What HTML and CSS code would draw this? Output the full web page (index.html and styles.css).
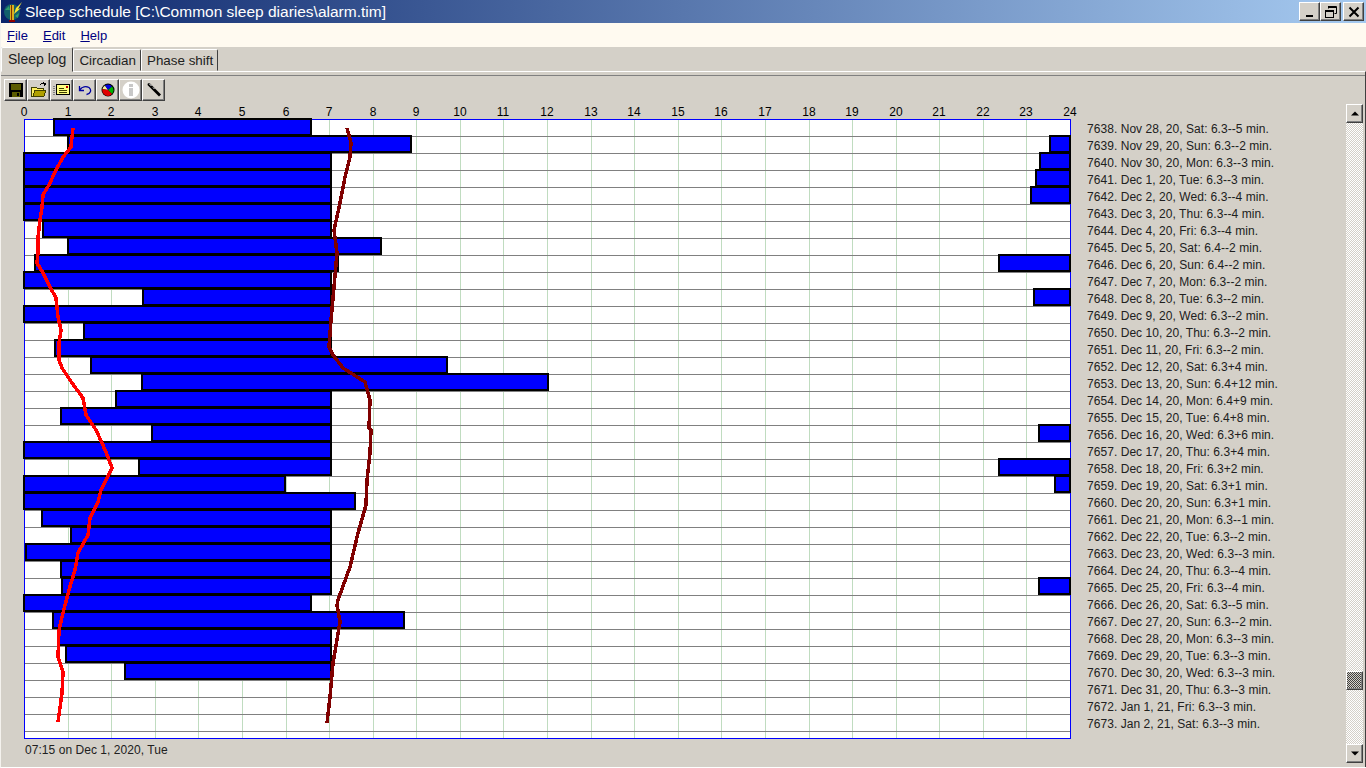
FILE: index.html
```html
<!DOCTYPE html>
<html lang="en">
<head>
    <meta charset="UTF-8">
    <title>Sleep schedule</title>
    <link rel="stylesheet" href="styles.css">
</head>
<body>
    <div class="titlebar">
        <svg class="app-icon" width="20" height="22" viewBox="0 0 20 22">
            <circle cx="9" cy="11" r="8" fill="#12606c"/>
            <path d="M2 9 L6 5 L7 9 Z M12 15 L16 12 L15 17 Z" fill="#2f9e6a"/>
            <path d="M13 7 L19 1 L15 8 L18 7 L11 13 Z" fill="#f6e632"/>
            <rect x="7" y="4" width="4" height="15" fill="#d8b020"/>
            <rect x="8" y="4" width="1" height="15" fill="#803000"/>
            <rect x="6" y="19" width="6" height="2" fill="#900000"/>
        </svg>
        <span class="title-text">Sleep schedule [C:\Common sleep diaries\alarm.tim]</span>
        <div class="caption-buttons">
            <button class="bevel caption-btn">
                <svg width="12" height="12" viewBox="0 0 12 12"><rect x="2" y="9" width="7" height="2"/></svg>
            </button>
            <button class="bevel caption-btn">
                <svg width="14" height="14" viewBox="0 0 14 14" fill="none" stroke="#000"><path d="M4.5 3.5 V1.5 H12.5 V8.5 H10.5"/><path d="M4 2 H12" stroke-width="2"/><rect x="1.5" y="5.5" width="8" height="7"/><path d="M1 6 H10" stroke-width="2"/></svg>
            </button>
            <button class="bevel caption-btn close-btn">
                <svg width="12" height="12" viewBox="0 0 12 12" stroke="#000" stroke-width="2"><path d="M1.5 1.5 L10.5 10.5 M10.5 1.5 L1.5 10.5"/></svg>
            </button>
        </div>
    </div>

    <div class="menubar">
        <span class="menu-item"><u>F</u>ile</span>
        <span class="menu-item"><u>E</u>dit</span>
        <span class="menu-item"><u>H</u>elp</span>
    </div>

    <div class="tabs">
        <div class="tab active">Sleep log</div>
        <div class="tab">Circadian</div>
        <div class="tab">Phase shift</div>
    </div>

    <div class="panel">
        <div class="toolbar">
            <button class="bevel tool-btn">
                <svg width="16" height="16" viewBox="0 0 16 16" shape-rendering="crispEdges"><rect x="1" y="1" width="14" height="14"/><rect x="3" y="2" width="10" height="6" fill="#5c5c00"/><rect x="4" y="10" width="8" height="5" fill="#5c5c00"/><rect x="9" y="11" width="2" height="3"/></svg>
            </button>
            <button class="bevel tool-btn">
                <svg width="18" height="16" viewBox="0 0 18 16" shape-rendering="crispEdges"><path d="M1 5 H6 L7 6 H13 V8 H5 L3 14 H1 Z" fill="#fff060" stroke="#404000"/><path d="M3 14 L5 8 H16 L14 14 Z" fill="#b0a000" stroke="#404000"/><path d="M10 3 C11 1 13 1 15 2 M13 0.5 L15.5 2 L14 4" fill="none" stroke="#000"/></svg>
            </button>
            <button class="bevel tool-btn">
                <svg width="18" height="14" viewBox="0 0 18 14" shape-rendering="crispEdges"><path d="M0 3 H2 M0 5 H2 M0 7 H2 M0 9 H2 M0 11 H2" stroke="#808080"/><rect x="3.5" y="1.5" width="13" height="10" fill="#ffff80" stroke="#000"/><rect x="13" y="3" width="2" height="2" fill="#c00000"/><path d="M6 5 H11 M6 7 H14 M6 9 H14" stroke="#404000"/></svg>
            </button>
            <button class="bevel tool-btn">
                <svg width="14" height="12" viewBox="0 0 14 12" fill="none" stroke="#0000a0" stroke-width="1.3"><path d="M1.5 6 C4 2.5 8 2 11 3.5 C14 6 12.5 10 8.5 10.5"/><path d="M1.5 2 V6.5 H6"/></svg>
            </button>
            <button class="bevel tool-btn">
                <svg width="14" height="14" viewBox="0 0 14 14"><circle cx="7" cy="7" r="6.5"/><path d="M7 7 L1.5 6 A5.5 5.5 0 0 1 4 2.5 Z" fill="#f0f0a0"/><path d="M7 7 L4 2.5 A5.5 5.5 0 0 1 11 3.5 Z" fill="#0000e0"/><path d="M7 7 L11 3.5 A5.5 5.5 0 0 1 11 11 Z" fill="#00b000"/><path d="M7 7 L11 11 A5.5 5.5 0 0 1 1.5 6 Z" fill="#e00000"/></svg>
            </button>
            <button class="bevel tool-btn">
                <svg width="18" height="18" viewBox="0 0 18 18"><circle cx="9" cy="9" r="8.5" fill="#fff"/><rect x="7" y="3" width="4" height="3" fill="#c8c8c8"/><rect x="7" y="7" width="4" height="8" fill="#c8c8c8"/></svg>
            </button>
            <button class="bevel tool-btn">
                <svg width="16" height="16" viewBox="0 0 16 16"><path d="M2 1 L3.5 1 L15 12.5 L13 14.5 L1.5 3 Z"/><path d="M3 1.5 L5.5 4 M7 5.5 L8.5 7" stroke="#fff" stroke-width="1"/></svg>
            </button>
        </div>

        <div class="content">
            <div class="chart-col">
                <svg id="chart" class="chart" width="1083" height="640" viewBox="0 103 1083 640"></svg>
                <div class="status">07:15 on Dec 1, 2020, Tue</div>
            </div>
            <div class="diary-list">
                <div>7638. Nov 28, 20, Sat: 6.3--5 min.</div>
                <div>7639. Nov 29, 20, Sun: 6.3--2 min.</div>
                <div>7640. Nov 30, 20, Mon: 6.3--3 min.</div>
                <div>7641. Dec 1, 20, Tue: 6.3--3 min.</div>
                <div>7642. Dec 2, 20, Wed: 6.3--4 min.</div>
                <div>7643. Dec 3, 20, Thu: 6.3--4 min.</div>
                <div>7644. Dec 4, 20, Fri: 6.3--4 min.</div>
                <div>7645. Dec 5, 20, Sat: 6.4--2 min.</div>
                <div>7646. Dec 6, 20, Sun: 6.4--2 min.</div>
                <div>7647. Dec 7, 20, Mon: 6.3--2 min.</div>
                <div>7648. Dec 8, 20, Tue: 6.3--2 min.</div>
                <div>7649. Dec 9, 20, Wed: 6.3--2 min.</div>
                <div>7650. Dec 10, 20, Thu: 6.3--2 min.</div>
                <div>7651. Dec 11, 20, Fri: 6.3--2 min.</div>
                <div>7652. Dec 12, 20, Sat: 6.3+4 min.</div>
                <div>7653. Dec 13, 20, Sun: 6.4+12 min.</div>
                <div>7654. Dec 14, 20, Mon: 6.4+9 min.</div>
                <div>7655. Dec 15, 20, Tue: 6.4+8 min.</div>
                <div>7656. Dec 16, 20, Wed: 6.3+6 min.</div>
                <div>7657. Dec 17, 20, Thu: 6.3+4 min.</div>
                <div>7658. Dec 18, 20, Fri: 6.3+2 min.</div>
                <div>7659. Dec 19, 20, Sat: 6.3+1 min.</div>
                <div>7660. Dec 20, 20, Sun: 6.3+1 min.</div>
                <div>7661. Dec 21, 20, Mon: 6.3--1 min.</div>
                <div>7662. Dec 22, 20, Tue: 6.3--2 min.</div>
                <div>7663. Dec 23, 20, Wed: 6.3--3 min.</div>
                <div>7664. Dec 24, 20, Thu: 6.3--4 min.</div>
                <div>7665. Dec 25, 20, Fri: 6.3--4 min.</div>
                <div>7666. Dec 26, 20, Sat: 6.3--5 min.</div>
                <div>7667. Dec 27, 20, Sun: 6.3--2 min.</div>
                <div>7668. Dec 28, 20, Mon: 6.3--3 min.</div>
                <div>7669. Dec 29, 20, Tue: 6.3--3 min.</div>
                <div>7670. Dec 30, 20, Wed: 6.3--3 min.</div>
                <div>7671. Dec 31, 20, Thu: 6.3--3 min.</div>
                <div>7672. Jan 1, 21, Fri: 6.3--3 min.</div>
                <div>7673. Jan 2, 21, Sat: 6.3--3 min.</div>
            </div>
            <div class="scrollbar">
                <button class="bevel scroll-btn"><svg width="8" height="5" viewBox="0 0 8 5"><path d="M0 4.5 L4 0.5 L8 4.5 Z"/></svg></button>
                <div class="track track-upper"></div>
                <div class="thumb bevel"></div>
                <div class="track track-lower"></div>
                <button class="bevel scroll-btn"><svg width="8" height="5" viewBox="0 0 8 5"><path d="M0 0.5 L8 0.5 L4 4.5 Z"/></svg></button>
            </div>
        </div>
    </div>

    <script src="script.js"></script>
</body>
</html>
```

FILE: styles.css
```css
* { box-sizing: border-box; }
html, body { height: 100%; }
body { margin: 0; height: 768px; overflow: hidden; background-color: #d4d0c8; color: #000; font-family: "Liberation Sans", Arial, sans-serif; font-size: 12px; display: flex; flex-direction: column; border-left: 1px solid #f4f2ee; border-bottom: 1px solid #fff; }

button { padding: 0; margin: 0; background-color: #d4d0c8; display: flex; align-items: center; justify-content: center; }
.bevel { border: 1px solid; border-color: #fff #404040 #404040 #fff; box-shadow: inset -1px -1px 0 #808080; }

.titlebar { height: 23px; margin-left: -1px; flex-shrink: 0; display: flex; align-items: center; background: linear-gradient(to right, #0a246a, #a6caf0); color: #fff; padding-left: 3px; }
.app-icon { flex-shrink: 0; }
.title-text { margin-left: 2px; font-size: 15.5px; white-space: nowrap; }
.caption-buttons { margin-left: auto; margin-right: 2px; display: flex; }
.caption-btn { width: 21px; height: 19px; }
.close-btn { margin-left: 2px; }

.menubar { height: 24px; flex-shrink: 0; margin-left: -1px; background-color: #fffaf0; display: flex; align-items: center; padding-left: 7px; gap: 15px; font-size: 13px; color: #000080; }

.tabs { height: 24px; flex-shrink: 0; display: flex; align-items: flex-end; }
.tab { height: 22px; padding: 0 4px 0 5px; font-size: 13.4px; line-height: 22px; color: #202020; border: 1px solid; border-color: #fff #404040 #d4d0c8 #fff; border-radius: 2px 2px 0 0; }
.tab.active { position: relative; z-index: 1; height: 25px; margin-bottom: -1px; padding: 0 6px; font-size: 14px; line-height: 23px; }

.panel { flex: 1; min-height: 0; display: flex; flex-direction: column; border-top: 1px solid #fff; border-right: 1px solid #404040; }
.toolbar { flex-shrink: 0; display: flex; padding: 3px 0 2px 3px; border-top: 1px solid #808080; margin-top: 3px; }
.tool-btn { width: 23px; height: 22px; }

.content { flex: 1; min-height: 0; display: flex; }
.chart-col { width: 1085px; flex-shrink: 0; }
.chart { display: block; margin-left: -1px; }
.chart text { font-family: "Liberation Sans", Arial, sans-serif; font-size: 12px; text-anchor: middle; fill: #000; }
.status { padding-left: 24px; line-height: 14px; color: #202020; letter-spacing: 0.05px; }

.diary-list { flex: 1; padding-top: 18px; padding-left: 1px; line-height: 17px; color: #202020; white-space: nowrap; letter-spacing: 0.05px; }

.scrollbar { width: 17px; margin-right: 2px; margin-top: 1px; margin-bottom: 4px; display: flex; flex-direction: column; }
.scroll-btn { height: 19px; width: 17px; flex-shrink: 0; }
.track { background: repeating-conic-gradient(#fff 0 25%, #d4d0c8 0 50%) 0 0 / 2px 2px; }
.track-upper { flex: 1; }
.track-lower { height: 54px; }
.thumb { height: 19px; flex-shrink: 0; background: repeating-conic-gradient(#404040 0 25%, #d4d0c8 0 50%) 0 0 / 2px 2px; }
```

FILE: script.js
```js
// chart is drawn in page coordinates, see viewBox on #chart
const chart = document.getElementById('chart');
const left = 24, right = 1070, top0 = 119, rowH = 17, rows = 36, bottom = 738;
const hourW = (right - left) / 24;

// sleep blocks per row, [from, to] in px
const bars = [
    [[54, 311]],
    [[68, 411], [1050, 1070]],
    [[24, 331], [1040, 1070]],
    [[24, 331], [1036, 1070]],
    [[24, 331], [1031, 1070]],
    [[24, 331]],
    [[43, 331]],
    [[68, 381]],
    [[35, 338], [999, 1070]],
    [[24, 331]],
    [[143, 331], [1034, 1070]],
    [[24, 331]],
    [[84, 331]],
    [[55, 331]],
    [[91, 447]],
    [[142, 548]],
    [[116, 331]],
    [[61, 331]],
    [[152, 331], [1039, 1070]],
    [[24, 331]],
    [[139, 331], [999, 1070]],
    [[24, 285], [1055, 1070]],
    [[24, 355]],
    [[42, 331]],
    [[71, 331]],
    [[26, 331]],
    [[61, 331]],
    [[62, 331], [1039, 1070]],
    [[24, 311]],
    [[53, 404]],
    [[58, 331]],
    [[66, 331]],
    [[125, 331]]
];

const redCurve = [[73, 128], [72, 137], [71, 147], [63, 157], [55, 172], [50, 183], [43, 195], [42, 207], [40, 220], [38, 237], [38, 253], [37, 263], [43, 273], [50, 287], [56, 298], [58, 317], [61, 330], [59, 343], [59, 360], [62, 368], [72, 383], [83, 398], [86, 415], [96, 430], [102, 443], [108, 457], [112, 468], [107, 478], [101, 490], [98, 502], [90, 518], [88, 535], [78, 553], [75, 570], [69, 590], [63, 613], [59, 630], [58, 657], [63, 672], [62, 693], [58, 722]];
const darkCurve = [[347, 128], [351, 143], [350, 157], [345, 177], [340, 203], [334, 230], [337, 253], [334, 287], [331, 320], [329, 347], [333, 355], [343, 368], [365, 382], [370, 400], [369, 428], [371, 430], [370, 453], [367, 480], [366, 505], [358, 533], [350, 567], [338, 600], [337, 605], [340, 622], [333, 663], [330, 697], [327, 723]];

function add(tag, attrs, text) {
    const el = document.createElementNS('http://www.w3.org/2000/svg', tag);
    for (const k in attrs) el.setAttribute(k, attrs[k]);
    if (text !== undefined) el.textContent = text;
    chart.appendChild(el);
    return el;
}

add('rect', { x: left, y: top0, width: right - left, height: bottom - top0, fill: '#fff' });

for (let h = 0; h <= 24; h++) {
    const x = Math.round(left + h * hourW);
    add('text', { x: x, y: 116 }, h);
    add('rect', { x: x, y: top0, width: 1, height: bottom - top0, fill: '#c0dcc0' });
}
for (let r = 1; r <= rows; r++) {
    add('rect', { x: left, y: top0 + r * rowH, width: right - left, height: 1, fill: '#808080' });
}
add('rect', { x: left + 0.5, y: top0 + 0.5, width: right - left, height: bottom - top0, fill: 'none', stroke: '#0000ff' });

bars.forEach(function (row, r) {
    const y = top0 + r * rowH;
    row.forEach(function (b) {
        add('rect', { x: b[0] - 1, y: y - 1, width: b[1] - b[0] + 2, height: 18, fill: '#000' });
        add('rect', { x: b[0] + 1, y: y + 1, width: b[1] - b[0] - 2, height: 14, fill: '#0000ff' });
    });
});

function curve(points, color) {
    add('polyline', { points: points.join(' '), fill: 'none', stroke: color, 'stroke-width': 3.5, 'stroke-linejoin': 'round', 'shape-rendering': 'crispEdges' });
}
curve(redCurve, '#ff0000');
curve(darkCurve, '#800000');
```
